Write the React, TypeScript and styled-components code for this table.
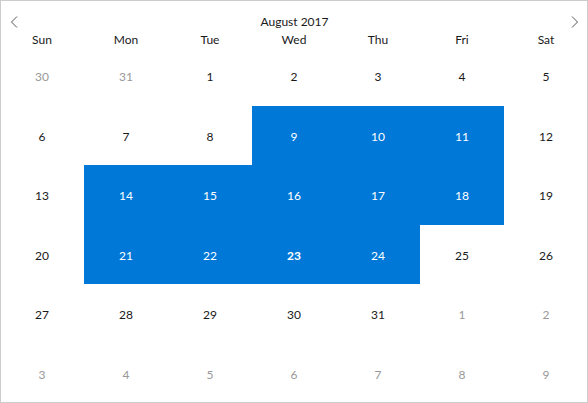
import React from "react";
import styled, { createGlobalStyle } from "styled-components";

const Global = createGlobalStyle`
  html, body { margin: 0; padding: 0; background: #fff; }
  body { font-family: Lato, "Noto Sans", sans-serif; }
`;

const Calendar = styled.div`
  position: relative;
  width: 588px;
  height: 403px;
  box-sizing: border-box;
  display: flex;
  flex-direction: column;
  background: #fff;
  overflow: hidden;
  &::after {
    content: "";
    position: absolute;
    inset: 0;
    border: 1px solid #cccccc;
    pointer-events: none;
  }
`;

const Header = styled.div`
  height: 46px;
  display: flex;
  flex-direction: column;
`;

const TitleBar = styled.div`
  height: 33px;
  display: flex;
  align-items: flex-start;
  justify-content: space-between;
  padding: 0 9px 0 10px;
`;

const Title = styled.div`
  font-size: 12px;
  color: #1a1a1a;
  line-height: 14px;
  margin-top: 15px;
`;

const NavButton = styled.button`
  width: 8px;
  height: 12px;
  padding: 0;
  margin-top: 16px;
  border: none;
  background: transparent;
  display: flex;
  align-items: center;
  justify-content: center;
  cursor: pointer;
`;

const WeekRow = styled.div`
  display: grid;
  grid-template-columns: repeat(7, 84px);
  height: 13px;
`;

const WeekDay = styled.div`
  font-size: 12px;
  color: #1a1a1a;
  text-align: center;
  line-height: 14px;
`;

const Grid = styled.div`
  display: grid;
  grid-template-columns: repeat(7, 84px);
  grid-template-rows: repeat(6, 1fr);
  flex: 1;
`;

const Cell = styled.div<{ $muted?: boolean; $selected?: boolean; $today?: boolean }>`
  display: flex;
  align-items: center;
  justify-content: center;
  padding-top: 2px;
  font-size: 12px;
  background: ${(p) => (p.$selected ? "#0078d7" : "transparent")};
  color: ${(p) => (p.$selected ? "#ffffff" : p.$muted ? "#999999" : "#1a1a1a")};
  font-weight: ${(p) => (p.$today ? 700 : 400)};
`;

const Chevron = ({ dir }: { dir: "left" | "right" }) => (
  <svg width="8" height="12" viewBox="0 0 8 12">
    <path
      d={dir === "left" ? "M7 0.5 L1.5 6 L7 11.5" : "M1 0.5 L6.5 6 L1 11.5"}
      fill="none"
      stroke="#555"
      strokeWidth="1"
    />
  </svg>
);

const weekdays = ["Sun", "Mon", "Tue", "Wed", "Thu", "Fri", "Sat"];

type Day = { n: number; muted?: boolean };

const days: Day[] = [
  { n: 30, muted: true },
  { n: 31, muted: true },
  ...Array.from({ length: 31 }, (_, i) => ({ n: i + 1 })),
  ...Array.from({ length: 9 }, (_, i) => ({ n: i + 1, muted: true })),
];

const selected = new Set([9, 10, 11, 14, 15, 16, 17, 18, 21, 22, 23, 24]);

export default function App() {
  return (
    <>
      <Global />
      <Calendar>
        <Header>
          <TitleBar>
            <NavButton aria-label="Previous month">
              <Chevron dir="left" />
            </NavButton>
            <Title>August 2017</Title>
            <NavButton aria-label="Next month">
              <Chevron dir="right" />
            </NavButton>
          </TitleBar>
          <WeekRow>
            {weekdays.map((w) => (
              <WeekDay key={w}>{w}</WeekDay>
            ))}
          </WeekRow>
        </Header>
        <Grid>
          {days.map((d, i) => (
            <Cell
              key={i}
              $muted={d.muted}
              $selected={!d.muted && selected.has(d.n)}
              $today={!d.muted && d.n === 23}
            >
              {d.n}
            </Cell>
          ))}
        </Grid>
      </Calendar>
    </>
  );
}
